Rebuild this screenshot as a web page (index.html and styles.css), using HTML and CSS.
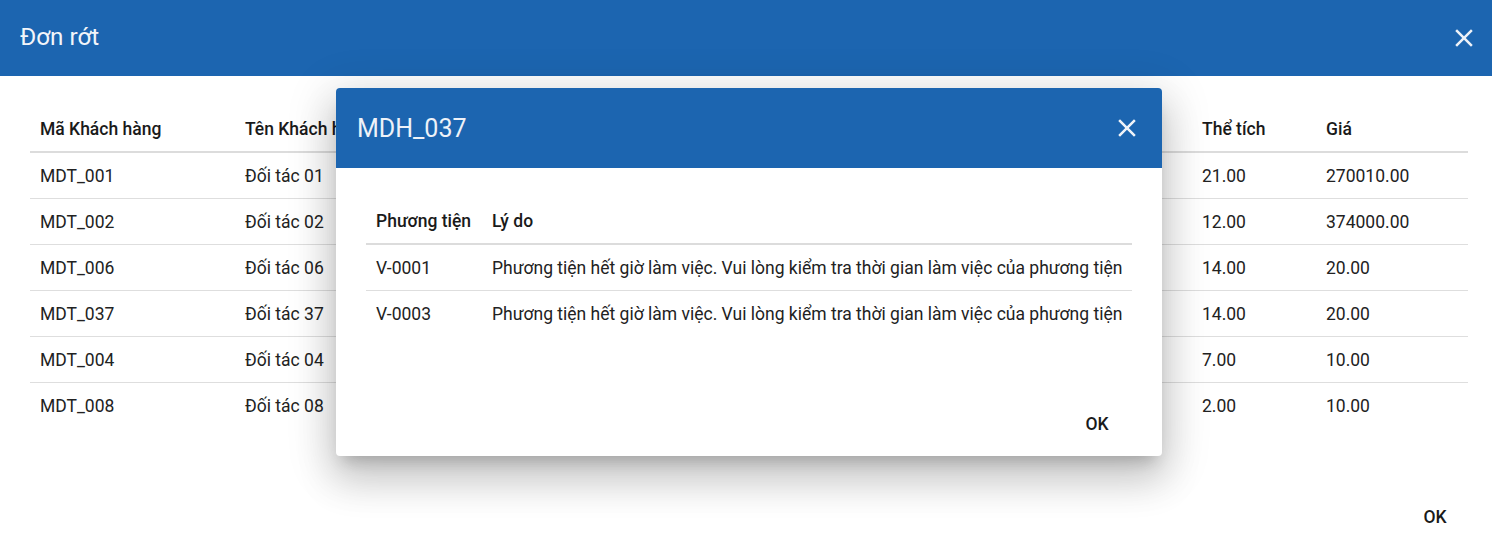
FILE: index.html
```html
<!DOCTYPE html>
<html lang="vi">
<head>
<meta charset="utf-8">
<title>Đơn rớt</title>
<link rel="stylesheet" href="styles.css">
</head>
<body>
<div class="page">
  <header class="topbar">
    <h1 class="topbar-title">Đơn rớt</h1>
    <button class="icon-btn" aria-label="Đóng">
      <svg viewBox="0 0 24 24" width="30" height="30"><path d="M19 6.41L17.59 5 12 10.59 6.41 5 5 6.41 10.59 12 5 17.59 6.41 19 12 13.41 17.59 19 19 17.59 13.41 12z" fill="currentColor"/></svg>
    </button>
  </header>
  <main class="content">
    <table class="grid main-grid">
      <colgroup>
        <col class="c-code"><col class="c-name"><col class="c-vol"><col class="c-price">
      </colgroup>
      <thead>
        <tr><th>Mã Khách hàng</th><th>Tên Khách hàng</th><th>Thể tích</th><th>Giá</th></tr>
      </thead>
      <tbody>
        <tr><td>MDT_001</td><td>Đối tác 01</td><td>21.00</td><td>270010.00</td></tr>
        <tr><td>MDT_002</td><td>Đối tác 02</td><td>12.00</td><td>374000.00</td></tr>
        <tr><td>MDT_006</td><td>Đối tác 06</td><td>14.00</td><td>20.00</td></tr>
        <tr><td>MDT_037</td><td>Đối tác 37</td><td>14.00</td><td>20.00</td></tr>
        <tr><td>MDT_004</td><td>Đối tác 04</td><td>7.00</td><td>10.00</td></tr>
        <tr><td>MDT_008</td><td>Đối tác 08</td><td>2.00</td><td>10.00</td></tr>
      </tbody>
    </table>
  </main>
  <footer class="actions page-actions">
    <button class="text-btn">OK</button>
  </footer>

  <div class="dialog" role="dialog">
    <div class="dialog-head">
      <h2 class="dialog-title">MDH_037</h2>
      <button class="icon-btn" aria-label="Đóng">
        <svg viewBox="0 0 24 24" width="30" height="30"><path d="M19 6.41L17.59 5 12 10.59 6.41 5 5 6.41 10.59 12 5 17.59 6.41 19 12 13.41 17.59 19 19 17.59 13.41 12z" fill="currentColor"/></svg>
      </button>
    </div>
    <div class="dialog-body">
      <table class="grid">
        <thead>
          <tr><th class="c-veh">Phương tiện</th><th>Lý do</th></tr>
        </thead>
        <tbody>
          <tr><td>V-0001</td><td>Phương tiện hết giờ làm việc. Vui lòng kiểm tra thời gian làm việc của phương tiện</td></tr>
          <tr><td>V-0003</td><td>Phương tiện hết giờ làm việc. Vui lòng kiểm tra thời gian làm việc của phương tiện</td></tr>
        </tbody>
      </table>
    </div>
    <div class="actions dialog-actions">
      <button class="text-btn">OK</button>
    </div>
  </div>
</div>
</body>
</html>
```

FILE: styles.css
```css
* { box-sizing: border-box; }
html, body { margin: 0; padding: 0; }
body {
  font-family: Roboto, "Noto Sans", "Liberation Sans", sans-serif;
  color: #212121;
  background: #fff;
}
.page {
  position: relative;
  width: 1492px;
  height: 539px;
  overflow: hidden;
  display: flex;
  flex-direction: column;
}
.topbar {
  height: 76px;
  background: #1c65b0;
  color: #f2f5fa;
  display: flex;
  align-items: center;
  justify-content: space-between;
  padding: 0 13px 0 20px;
  flex-shrink: 0;
}
.topbar-title {
  margin: 0 0 2px 0;
  font-size: 24.2px;
  font-weight: 400;
}
.icon-btn {
  border: 0;
  background: transparent;
  color: #eef2f8;
  padding: 0;
  width: 30px;
  height: 30px;
  display: flex;
  align-items: center;
  justify-content: center;
  cursor: pointer;
}
.content {
  padding: 30px 24px 0 30px;
  flex: 1;
}
.grid {
  width: 100%;
  border-collapse: collapse;
  table-layout: fixed;
  font-size: 17.5px;
}
.grid th {
  text-align: left;
  font-weight: 500;
  height: 46px;
  padding: 0 10px;
  border-bottom: 2px solid #dcdcdc;
  color: #1a1a1a;
  white-space: nowrap;
}
.grid td {
  height: 46px;
  padding: 2px 10px 0 10px;
  border-bottom: 1px solid #dedede;
  white-space: nowrap;
  color: #222;
}
.grid tbody tr:last-child td { border-bottom: 0; }
.main-grid .c-code { width: 205px; }
.main-grid .c-name { width: 957px; }
.main-grid .c-vol { width: 124px; }
.main-grid .c-price { width: auto; }
.actions {
  display: flex;
  justify-content: flex-end;
}
.page-actions {
  padding: 0 25px 5px 0;
}
.text-btn {
  border: 0;
  background: transparent;
  font-family: inherit;
  font-size: 17.5px;
  font-weight: 500;
  color: #1a1a1a;
  height: 36px;
  min-width: 64px;
  padding: 2px 8px 0 8px;
  cursor: pointer;
}
.dialog {
  position: absolute;
  left: 336px;
  top: 88px;
  width: 826px;
  background: #fff;
  border-radius: 4px;
  overflow: hidden;
  box-shadow: 0 11px 15px -7px rgba(0,0,0,.2), 0 24px 38px 3px rgba(0,0,0,.14), 0 9px 46px 8px rgba(0,0,0,.12);
}
.dialog-head {
  height: 80px;
  background: #1c65b0;
  color: #eef2f8;
  display: flex;
  align-items: center;
  justify-content: space-between;
  padding: 0 20px 0 21px;
}
.dialog-title {
  margin: 0;
  font-size: 25px;
  font-weight: 400;
}
.dialog-body {
  padding: 30px 30px 0 30px;
}
.dialog-body .c-veh { width: 116px; }
.dialog-actions {
  padding: 69px 33px 15px 0;
}
```
